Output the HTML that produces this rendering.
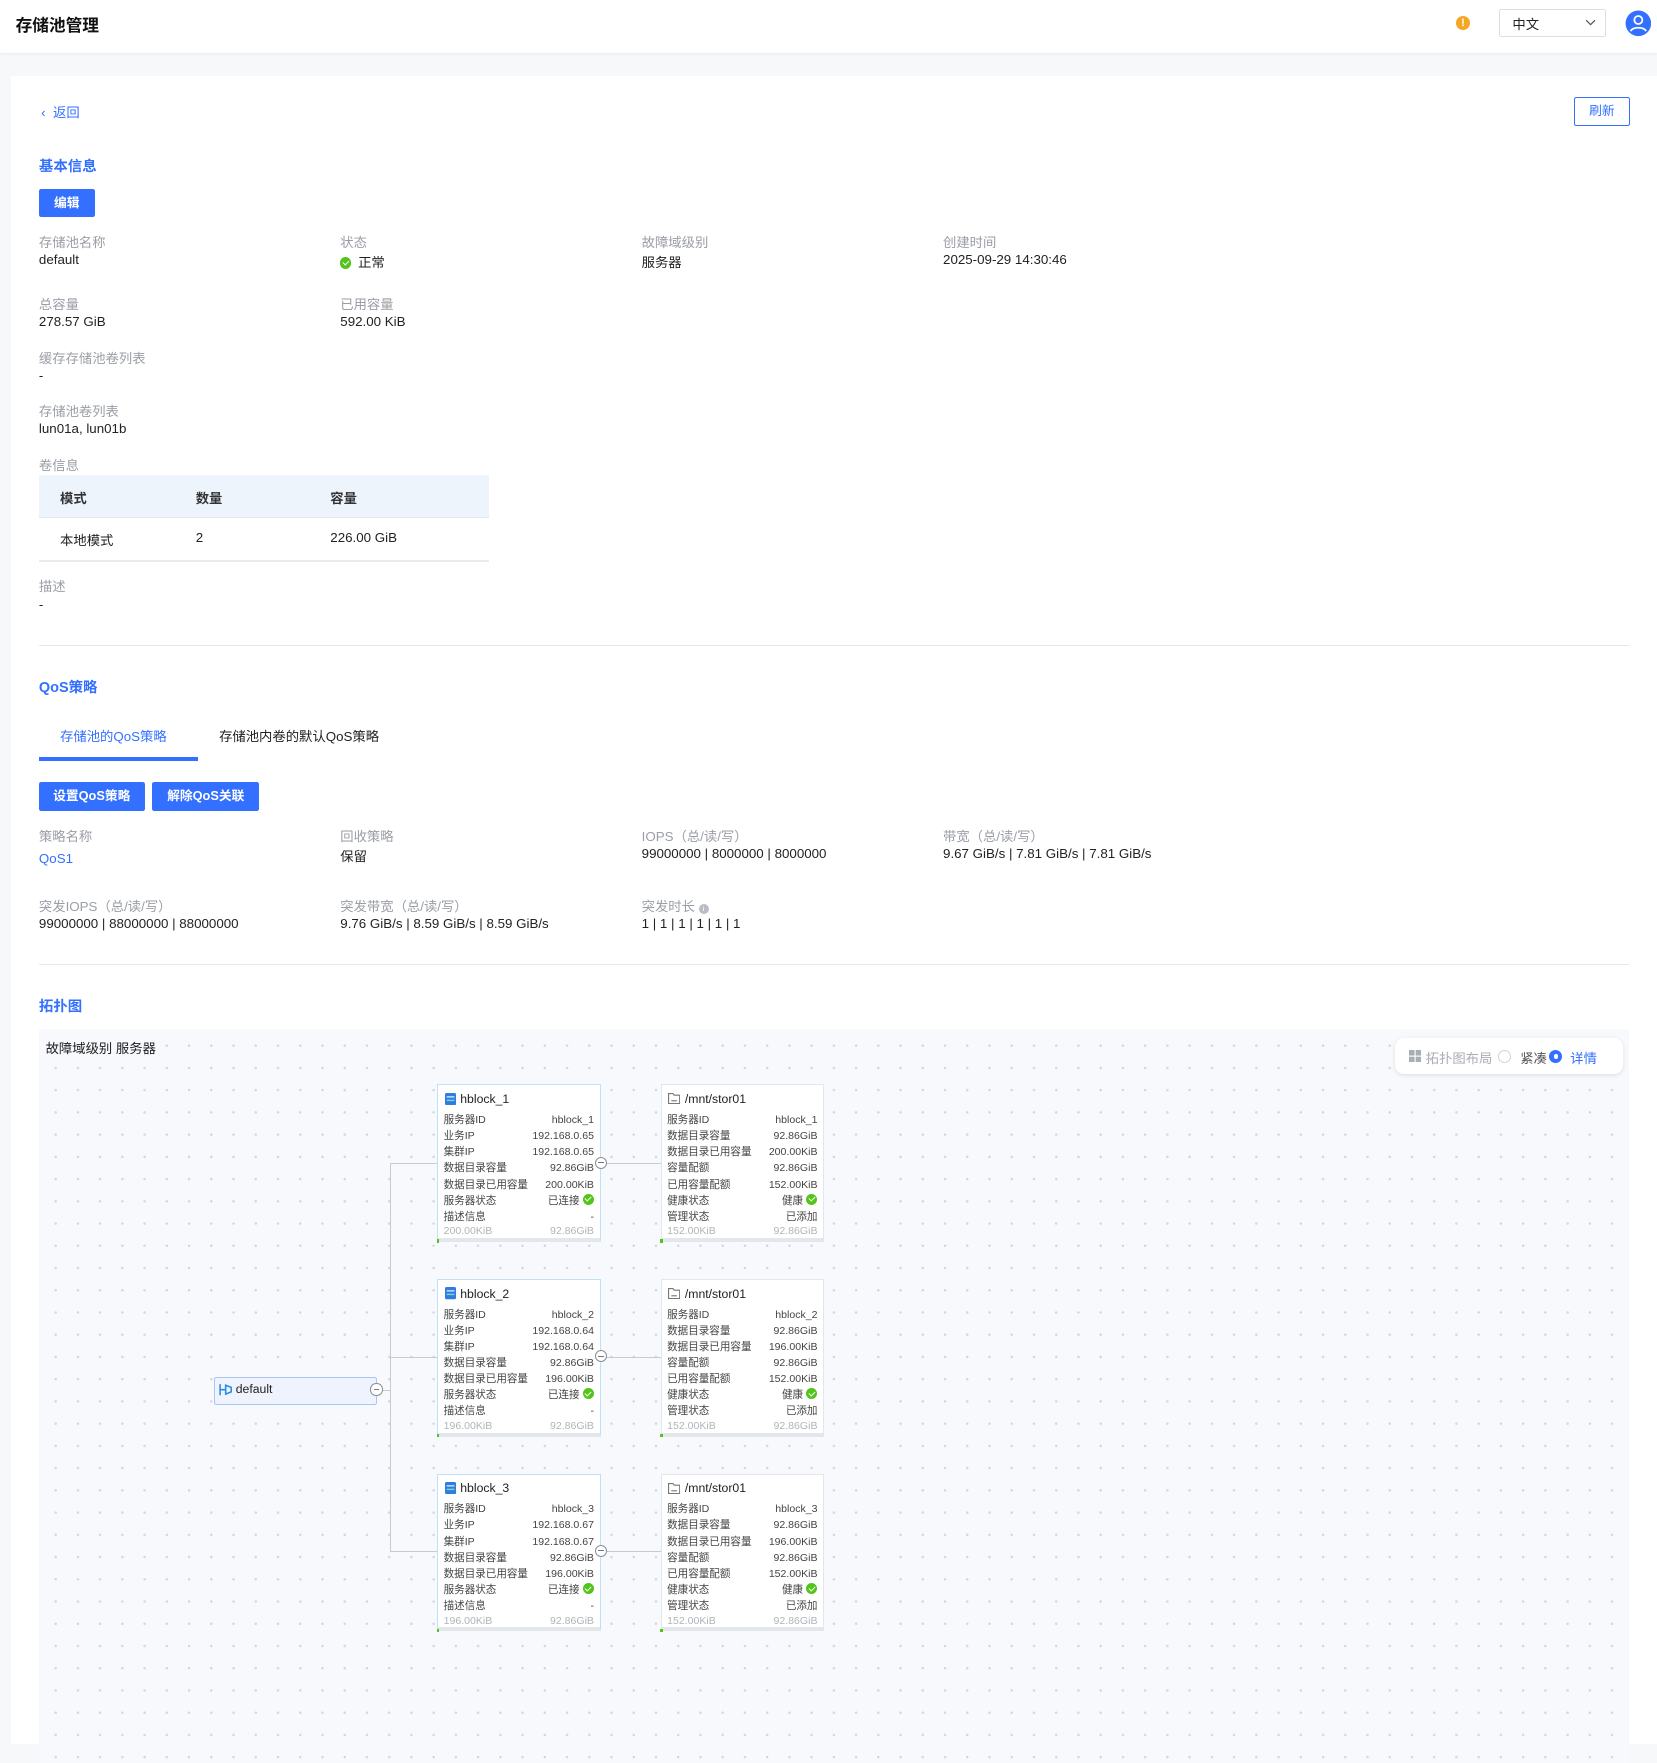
<!DOCTYPE html>
<html><head><meta charset="utf-8">
<style>
html{zoom:1.11208;}
*{box-sizing:border-box;margin:0;padding:0}
body{width:1490px;height:1568px;overflow:hidden;background:#f7f8fa;font-family:"Liberation Sans","Noto Sans CJK SC",sans-serif;color:#222;font-size:12px;position:relative}
.a{position:absolute;white-space:nowrap}
.hdr{position:absolute;left:0;top:0;width:1490px;height:48px;background:#fff;box-shadow:0 1px 3px rgba(0,0,0,.08)}
.card{position:absolute;left:10px;top:68px;width:1480px;height:1500px;background:#fff}
.blue{color:#3370ff}
.lbl{color:#9a9ea6;font-size:12px}
.val{color:#222;font-size:12px}
.sec{color:#3370ff;font-weight:bold;font-size:13px}
.btn{position:absolute;background:#3370ff;color:#fff;font-weight:bold;font-size:11.5px;text-align:center;border-radius:2px}
.topo{position:absolute;left:35px;top:925px;width:1430px;height:660px;background-color:#f7f9fd;background-image:radial-gradient(circle,#d3d8e0 1px,transparent 1.2px);background-size:20px 20px;background-position:5px 5px}
.nd{position:absolute;width:147px;height:142px;background:#fff;border:1px solid #e3e7ed;border-bottom:4px solid #e3e6ea;font-size:9.5px;color:#444}
.nd.h{border-color:#bfe0f7;border-bottom-color:#e3e6ea}
.nd .t{position:absolute;left:6px;top:6px;font-size:11px;color:#222;display:flex;align-items:center;gap:4px}
.nd .r{position:absolute;left:5px;right:5px;display:flex;justify-content:space-between;height:14px;line-height:14px}
.nd .r.f{color:#b0b4ba}
.nd .g{position:absolute;left:-1px;bottom:-4px;width:2px;height:3px;background:#52c41a}
.ok{display:inline-block;width:10px;height:10px;border-radius:50%;background:#52c41a;vertical-align:-1px;margin-left:3px;position:relative}
.ok:after{content:"";position:absolute;left:3px;top:1.5px;width:2.5px;height:4.5px;border:solid #fff;border-width:0 1.3px 1.3px 0;transform:rotate(45deg)}
.ln{position:absolute;background:#c5cad3}
.cc{position:absolute;width:11px;height:11px;border:1px solid #8a8f97;border-radius:50%;background:#fff}
.cc:after{content:"";position:absolute;left:2px;top:4px;width:5px;height:1px;background:#777}
</style></head><body>
<div class="hdr">
  <div class="a" style="left:14px;top:11px;font-size:15px;font-weight:bold;color:#111">存储池管理</div>
  <div class="a" style="left:1309px;top:14px;width:13px;height:13px;border-radius:50%;background:#f5a623;color:#fff;font-size:10px;font-weight:bold;text-align:center;line-height:13px">!</div>
  <div class="a" style="left:1348px;top:8px;width:96px;height:25px;border:1px solid #dcdfe6;border-radius:2px;background:#fff"></div>
  <div class="a" style="left:1360px;top:13px;font-size:12px">中文</div>
  <svg class="a" style="left:1425px;top:16px" width="10" height="8"><path d="M1 2l4 4 4-4" stroke="#555" fill="none" stroke-width="1.1"/></svg>
  <svg class="a" style="left:1461px;top:9px" width="24" height="24"><circle cx="12" cy="12" r="11.5" fill="#3370ff"/><circle cx="12" cy="9" r="3.6" fill="none" stroke="#fff" stroke-width="1.6"/><path d="M5 19c2-4 12-4 14 0" stroke="#fff" stroke-width="1.6" fill="none"/></svg>
</div>
<div class="card"></div>

<div class="a blue" style="left:37px;top:92px;font-size:12px">‹&nbsp; 返回</div>
<div class="a" style="left:1415px;top:87px;width:51px;height:26px;border:1px solid #3370ff;border-radius:2px;color:#3370ff;font-size:11.5px;text-align:center;line-height:24px">刷新</div>

<div class="a sec" style="left:35px;top:139px">基本信息</div>
<div class="btn" style="left:35px;top:170px;width:50px;height:25px;line-height:25px">编辑</div>

<div class="a lbl" style="left:35px;top:209px">存储池名称</div>
<div class="a val" style="left:35px;top:227px">default</div>
<div class="a lbl" style="left:306px;top:209px">状态</div>
<div class="a val" style="left:306px;top:227px"><span class="ok" style="margin:0 6px 0 0"></span>正常</div>
<div class="a lbl" style="left:577px;top:209px">故障域级别</div>
<div class="a val" style="left:577px;top:227px">服务器</div>
<div class="a lbl" style="left:848px;top:209px">创建时间</div>
<div class="a val" style="left:848px;top:227px">2025-09-29 14:30:46</div>

<div class="a lbl" style="left:35px;top:264px">总容量</div>
<div class="a val" style="left:35px;top:282px">278.57 GiB</div>
<div class="a lbl" style="left:306px;top:264px">已用容量</div>
<div class="a val" style="left:306px;top:282px">592.00 KiB</div>

<div class="a lbl" style="left:35px;top:313px">缓存存储池卷列表</div>
<div class="a val" style="left:35px;top:331px">-</div>
<div class="a lbl" style="left:35px;top:361px">存储池卷列表</div>
<div class="a val" style="left:35px;top:379px">lun01a, lun01b</div>
<div class="a lbl" style="left:35px;top:409px">卷信息</div>

<div class="a" style="left:35px;top:427px;width:405px;height:39px;background:#eef4fc;border-bottom:1px solid #e3e8ef"></div>
<div class="a" style="left:54px;top:439px;font-weight:bold;color:#333">模式</div>
<div class="a" style="left:176px;top:439px;font-weight:bold;color:#333">数量</div>
<div class="a" style="left:297px;top:439px;font-weight:bold;color:#333">容量</div>
<div class="a" style="left:35px;top:504px;width:405px;height:1px;background:#e8ebf0"></div>
<div class="a val" style="left:54px;top:477px">本地模式</div>
<div class="a val" style="left:176px;top:477px">2</div>
<div class="a val" style="left:297px;top:477px">226.00 GiB</div>

<div class="a lbl" style="left:35px;top:518px">描述</div>
<div class="a val" style="left:35px;top:537px">-</div>
<div class="a" style="left:35px;top:580px;width:1430px;height:1px;background:#e5e7eb"></div>

<div class="a sec" style="left:35px;top:608px">QoS策略</div>
<div class="a blue" style="left:54px;top:653px">存储池的QoS策略</div>
<div class="a" style="left:197px;top:653px;color:#222">存储池内卷的默认QoS策略</div>
<div class="a" style="left:35px;top:681px;width:143px;height:3px;background:#3370ff"></div>
<div class="btn" style="left:35px;top:703px;width:95px;height:26px;line-height:26px">设置QoS策略</div>
<div class="btn" style="left:137px;top:703px;width:96px;height:26px;line-height:26px">解除QoS关联</div>

<div class="a lbl" style="left:35px;top:743px">策略名称</div>
<div class="a blue" style="left:35px;top:765px">QoS1</div>
<div class="a lbl" style="left:306px;top:743px">回收策略</div>
<div class="a val" style="left:306px;top:761px">保留</div>
<div class="a lbl" style="left:577px;top:743px">IOPS（总/读/写）</div>
<div class="a val" style="left:577px;top:761px">99000000 | 8000000 | 8000000</div>
<div class="a lbl" style="left:848px;top:743px">带宽（总/读/写）</div>
<div class="a val" style="left:848px;top:761px">9.67 GiB/s | 7.81 GiB/s | 7.81 GiB/s</div>

<div class="a lbl" style="left:35px;top:806px">突发IOPS（总/读/写）</div>
<div class="a val" style="left:35px;top:824px">99000000 | 88000000 | 88000000</div>
<div class="a lbl" style="left:306px;top:806px">突发带宽（总/读/写）</div>
<div class="a val" style="left:306px;top:824px">9.76 GiB/s | 8.59 GiB/s | 8.59 GiB/s</div>
<div class="a lbl" style="left:577px;top:806px">突发时长 <span style="display:inline-block;width:9px;height:9px;border-radius:50%;background:#b8bcc4;color:#fff;font-size:7px;line-height:9px;text-align:center;vertical-align:0">i</span></div>
<div class="a val" style="left:577px;top:824px">1 | 1 | 1 | 1 | 1 | 1</div>
<div class="a" style="left:35px;top:867px;width:1430px;height:1px;background:#e5e7eb"></div>

<div class="a sec" style="left:35px;top:895px">拓扑图</div>
<div class="topo"></div>
<div class="a" style="left:41px;top:933px;color:#222">故障域级别 服务器</div>

<div class="a" style="left:1254px;top:933px;width:205px;height:33px;background:#fff;border-radius:8px;box-shadow:0 1px 4px rgba(0,0,0,.1)"></div>
<svg class="a" style="left:1267px;top:944px" width="11" height="11"><rect x="0" y="0" width="5" height="5" fill="#a9adb4"/><rect x="6" y="0" width="5" height="5" fill="#a9adb4"/><rect x="0" y="6" width="5" height="5" fill="#a9adb4"/><rect x="6" y="6" width="5" height="5" fill="#a9adb4"/></svg>
<div class="a" style="left:1282px;top:942px;color:#a9adb4">拓扑图布局</div>
<div class="a" style="left:1347px;top:944px;width:12px;height:12px;border:1px solid #d0d3d8;border-radius:50%;background:#fff"></div>
<div class="a" style="left:1367px;top:942px;color:#555">紧凑</div>
<div class="a" style="left:1393px;top:944px;width:12px;height:12px;border-radius:50%;background:#3370ff"></div>
<div class="a" style="left:1397px;top:948px;width:4px;height:4px;border-radius:50%;background:#fff"></div>
<div class="a blue" style="left:1412px;top:942px">详情</div>

<!-- connectors -->
<div class="ln" style="left:351px;top:1046px;width:1px;height:349px"></div>
<div class="ln" style="left:339px;top:1250px;width:12px;height:1px"></div>
<div class="ln" style="left:351px;top:1046px;width:42px;height:1px"></div>
<div class="ln" style="left:351px;top:1220px;width:42px;height:1px"></div>
<div class="ln" style="left:351px;top:1395px;width:42px;height:1px"></div>
<div class="ln" style="left:540px;top:1046px;width:54px;height:1px"></div>
<div class="ln" style="left:540px;top:1220px;width:54px;height:1px"></div>
<div class="ln" style="left:540px;top:1395px;width:54px;height:1px"></div>

<div class="a" style="left:192px;top:1238px;width:147px;height:25px;background:#eef3fd;border:1.5px solid #a9c6f5;border-radius:2px"></div>
<svg class="a" style="left:197px;top:1244px" width="12" height="12"><path d="M1 1v10M1 6h5M6 2l5 2v4l-5 2z" stroke="#2a8be0" stroke-width="1.4" fill="none"/></svg>
<div class="a" style="left:212px;top:1243px;font-size:11px">default</div>
<div class="cc" style="left:333px;top:1244px"></div>

<!-- row 1 -->
<div class="nd h" style="left:393px;top:975px">
 <div class="t"><svg width="10" height="11"><rect x="0" y="0" width="10" height="11" rx="1.5" fill="#2f7de1"/><rect x="1.5" y="3" width="7" height="1" fill="#fff"/><rect x="1.5" y="6" width="7" height="1.3" fill="#7fd3c6"/></svg>hblock_1</div>
 <div class="r" style="top:25px"><span>服务器ID</span><span>hblock_1</span></div>
 <div class="r" style="top:39.5px"><span>业务IP</span><span>192.168.0.65</span></div>
 <div class="r" style="top:54px"><span>集群IP</span><span>192.168.0.65</span></div>
 <div class="r" style="top:68.5px"><span>数据目录容量</span><span>92.86GiB</span></div>
 <div class="r" style="top:83px"><span>数据目录已用容量</span><span>200.00KiB</span></div>
 <div class="r" style="top:97.5px"><span>服务器状态</span><span>已连接<i class="ok"></i></span></div>
 <div class="r" style="top:112px"><span>描述信息</span><span>-</span></div>
 <div class="r f" style="top:125px"><span>200.00KiB</span><span>92.86GiB</span></div><div class="g"></div>
</div>
<div class="cc" style="left:535px;top:1040px"></div>
<div class="nd" style="left:594px;top:975px">
 <div class="t"><svg width="11" height="10"><path d="M.5 .5h4l1 1.5h5v7.5H.5z" fill="none" stroke="#777"/><path d="M3 7h5" stroke="#777"/></svg>/mnt/stor01</div>
 <div class="r" style="top:25px"><span>服务器ID</span><span>hblock_1</span></div>
 <div class="r" style="top:39.5px"><span>数据目录容量</span><span>92.86GiB</span></div>
 <div class="r" style="top:54px"><span>数据目录已用容量</span><span>200.00KiB</span></div>
 <div class="r" style="top:68.5px"><span>容量配额</span><span>92.86GiB</span></div>
 <div class="r" style="top:83px"><span>已用容量配额</span><span>152.00KiB</span></div>
 <div class="r" style="top:97.5px"><span>健康状态</span><span>健康<i class="ok"></i></span></div>
 <div class="r" style="top:112px"><span>管理状态</span><span>已添加</span></div>
 <div class="r f" style="top:125px"><span>152.00KiB</span><span>92.86GiB</span></div><div class="g"></div>
</div>

<!-- row 2 -->
<div class="nd h" style="left:393px;top:1150px">
 <div class="t"><svg width="10" height="11"><rect x="0" y="0" width="10" height="11" rx="1.5" fill="#2f7de1"/><rect x="1.5" y="3" width="7" height="1" fill="#fff"/><rect x="1.5" y="6" width="7" height="1.3" fill="#7fd3c6"/></svg>hblock_2</div>
 <div class="r" style="top:25px"><span>服务器ID</span><span>hblock_2</span></div>
 <div class="r" style="top:39.5px"><span>业务IP</span><span>192.168.0.64</span></div>
 <div class="r" style="top:54px"><span>集群IP</span><span>192.168.0.64</span></div>
 <div class="r" style="top:68.5px"><span>数据目录容量</span><span>92.86GiB</span></div>
 <div class="r" style="top:83px"><span>数据目录已用容量</span><span>196.00KiB</span></div>
 <div class="r" style="top:97.5px"><span>服务器状态</span><span>已连接<i class="ok"></i></span></div>
 <div class="r" style="top:112px"><span>描述信息</span><span>-</span></div>
 <div class="r f" style="top:125px"><span>196.00KiB</span><span>92.86GiB</span></div><div class="g"></div>
</div>
<div class="cc" style="left:535px;top:1214px"></div>
<div class="nd" style="left:594px;top:1150px">
 <div class="t"><svg width="11" height="10"><path d="M.5 .5h4l1 1.5h5v7.5H.5z" fill="none" stroke="#777"/><path d="M3 7h5" stroke="#777"/></svg>/mnt/stor01</div>
 <div class="r" style="top:25px"><span>服务器ID</span><span>hblock_2</span></div>
 <div class="r" style="top:39.5px"><span>数据目录容量</span><span>92.86GiB</span></div>
 <div class="r" style="top:54px"><span>数据目录已用容量</span><span>196.00KiB</span></div>
 <div class="r" style="top:68.5px"><span>容量配额</span><span>92.86GiB</span></div>
 <div class="r" style="top:83px"><span>已用容量配额</span><span>152.00KiB</span></div>
 <div class="r" style="top:97.5px"><span>健康状态</span><span>健康<i class="ok"></i></span></div>
 <div class="r" style="top:112px"><span>管理状态</span><span>已添加</span></div>
 <div class="r f" style="top:125px"><span>152.00KiB</span><span>92.86GiB</span></div><div class="g"></div>
</div>

<!-- row 3 -->
<div class="nd h" style="left:393px;top:1325px">
 <div class="t"><svg width="10" height="11"><rect x="0" y="0" width="10" height="11" rx="1.5" fill="#2f7de1"/><rect x="1.5" y="3" width="7" height="1" fill="#fff"/><rect x="1.5" y="6" width="7" height="1.3" fill="#7fd3c6"/></svg>hblock_3</div>
 <div class="r" style="top:25px"><span>服务器ID</span><span>hblock_3</span></div>
 <div class="r" style="top:39.5px"><span>业务IP</span><span>192.168.0.67</span></div>
 <div class="r" style="top:54px"><span>集群IP</span><span>192.168.0.67</span></div>
 <div class="r" style="top:68.5px"><span>数据目录容量</span><span>92.86GiB</span></div>
 <div class="r" style="top:83px"><span>数据目录已用容量</span><span>196.00KiB</span></div>
 <div class="r" style="top:97.5px"><span>服务器状态</span><span>已连接<i class="ok"></i></span></div>
 <div class="r" style="top:112px"><span>描述信息</span><span>-</span></div>
 <div class="r f" style="top:125px"><span>196.00KiB</span><span>92.86GiB</span></div><div class="g"></div>
</div>
<div class="cc" style="left:535px;top:1389px"></div>
<div class="nd" style="left:594px;top:1325px">
 <div class="t"><svg width="11" height="10"><path d="M.5 .5h4l1 1.5h5v7.5H.5z" fill="none" stroke="#777"/><path d="M3 7h5" stroke="#777"/></svg>/mnt/stor01</div>
 <div class="r" style="top:25px"><span>服务器ID</span><span>hblock_3</span></div>
 <div class="r" style="top:39.5px"><span>数据目录容量</span><span>92.86GiB</span></div>
 <div class="r" style="top:54px"><span>数据目录已用容量</span><span>196.00KiB</span></div>
 <div class="r" style="top:68.5px"><span>容量配额</span><span>92.86GiB</span></div>
 <div class="r" style="top:83px"><span>已用容量配额</span><span>152.00KiB</span></div>
 <div class="r" style="top:97.5px"><span>健康状态</span><span>健康<i class="ok"></i></span></div>
 <div class="r" style="top:112px"><span>管理状态</span><span>已添加</span></div>
 <div class="r f" style="top:125px"><span>152.00KiB</span><span>92.86GiB</span></div><div class="g"></div>
</div>
</body></html>
